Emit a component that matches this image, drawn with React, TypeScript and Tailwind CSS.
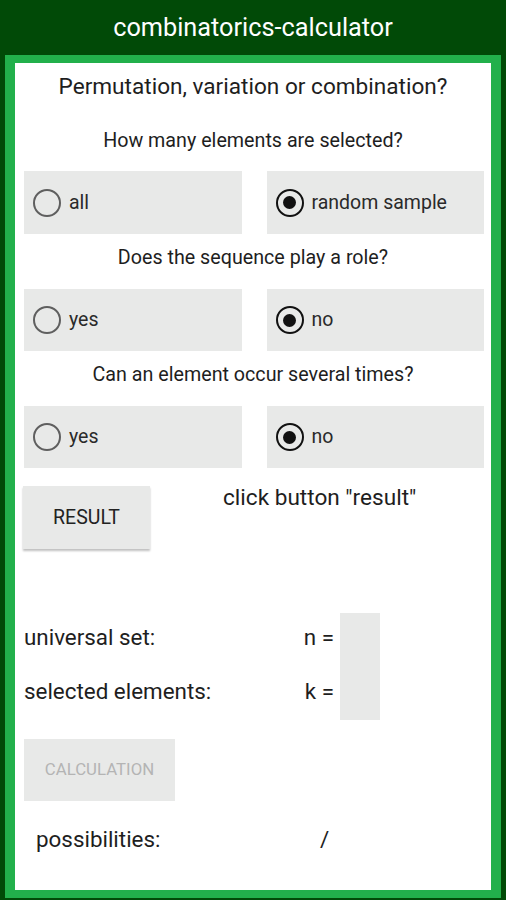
import React from 'react'

const font = { fontFamily: 'Roboto, "Noto Sans", Arial, sans-serif' }

function Radio({ label, checked }: { label: string; checked?: boolean }) {
    return (
        <div className="flex items-center h-full bg-[#e8e9e8] pl-[9px]">
            {checked ? (
                <div className="w-[28px] h-[28px] rounded-full border-[2.5px] border-[#111] flex items-center justify-center">
                    <div className="w-[13px] h-[13px] rounded-full bg-[#111]" />
                </div>
            ) : (
                <div className="w-[28px] h-[28px] rounded-full border-[2px] border-[#5f5f5f]" />
            )}
            <span className="ml-[8px] text-[19.5px] text-[#2a2a2a]">{label}</span>
        </div>
    )
}

function Question({ text }: { text: string }) {
    return (
        <div className="h-[48px] flex items-center justify-center text-[19.7px] text-[#1e1e1e]">
            {text}
        </div>
    )
}

export default function App() {
    return (
        <div className="w-[506px] h-[900px] bg-[#014a07] flex flex-col" style={font}>
            {/* Title bar */}
            <div className="h-[55px] flex items-center justify-center text-white text-[25.3px]">
                combinatorics-calculator
            </div>

            {/* Framed content */}
            <div className="flex-1 px-[5px] pb-[2px] flex">
                <div className="flex-1 border-x-[10px] border-y-[8px] border-[#22b04b] bg-white flex flex-col">
                    <div className="h-[48px] flex items-center justify-center text-[22.6px] text-[#1e1e1e]">
                        Permutation, variation or combination?
                    </div>

                    <div className="mt-[6px]">
                        <Question text="How many elements are selected?" />
                    </div>
                    <div className="mt-[6px] h-[63px] grid grid-cols-2 gap-[25px] pl-[9px] pr-[7px]">
                        <Radio label="all" />
                        <Radio label="random sample" checked />
                    </div>

                    <Question text="Does the sequence play a role?" />
                    <div className="mt-[7px] h-[62px] grid grid-cols-2 gap-[25px] pl-[9px] pr-[7px]">
                        <Radio label="yes" />
                        <Radio label="no" checked />
                    </div>

                    <Question text="Can an element occur several times?" />
                    <div className="mt-[7px] h-[62px] grid grid-cols-2 gap-[25px] pl-[9px] pr-[7px]">
                        <Radio label="yes" />
                        <Radio label="no" checked />
                    </div>

                    {/* Result button */}
                    <div className="mt-[18px] flex pl-[8px]">
                        <div className="w-[127px] h-[63px] bg-[#e8e9e8] shadow-[0_2px_2px_rgba(0,0,0,0.25)] flex items-center justify-center text-[19.5px] text-[#222]">
                            RESULT
                        </div>
                        <div className="ml-[73px] text-[22.6px] text-[#1e1e1e] leading-[24px]">
                            click button "result"
                        </div>
                    </div>

                    {/* Inputs */}
                    <div className="mt-[64px] flex pl-[9px]">
                        <div className="w-[271px] flex flex-col gap-[6px] pt-[1px]">
                            <div className="h-[48px] flex items-center text-[22.4px] text-[#1e1e1e] whitespace-nowrap">universal set:</div>
                            <div className="h-[48px] flex items-center text-[22.4px] text-[#1e1e1e] whitespace-nowrap">selected elements:</div>
                        </div>
                        <div className="w-[45px] flex flex-col gap-[6px] pr-[6px] pt-[1px]">
                            <div className="h-[48px] flex items-center justify-end text-[22.4px] text-[#1e1e1e] whitespace-nowrap">n =</div>
                            <div className="h-[48px] flex items-center justify-end text-[22.4px] text-[#1e1e1e] whitespace-nowrap">k =</div>
                        </div>
                        <div className="w-[40px] h-[107px] bg-[#e8e9e8]" />
                    </div>

                    {/* Calculation button */}
                    <div className="mt-[19px] pl-[9px]">
                        <div className="w-[151px] h-[62px] bg-[#e8e9e8] flex items-center justify-center text-[16.8px] text-[#b4b4b4]">
                            CALCULATION
                        </div>
                    </div>

                    <div className="mt-[15px] h-[48px] flex items-center pl-[21px] text-[22.4px] text-[#1e1e1e]">
                        <span className="w-[284px]">possibilities:</span>
                        <span>/</span>
                    </div>
                </div>
            </div>
        </div>
    )
}
